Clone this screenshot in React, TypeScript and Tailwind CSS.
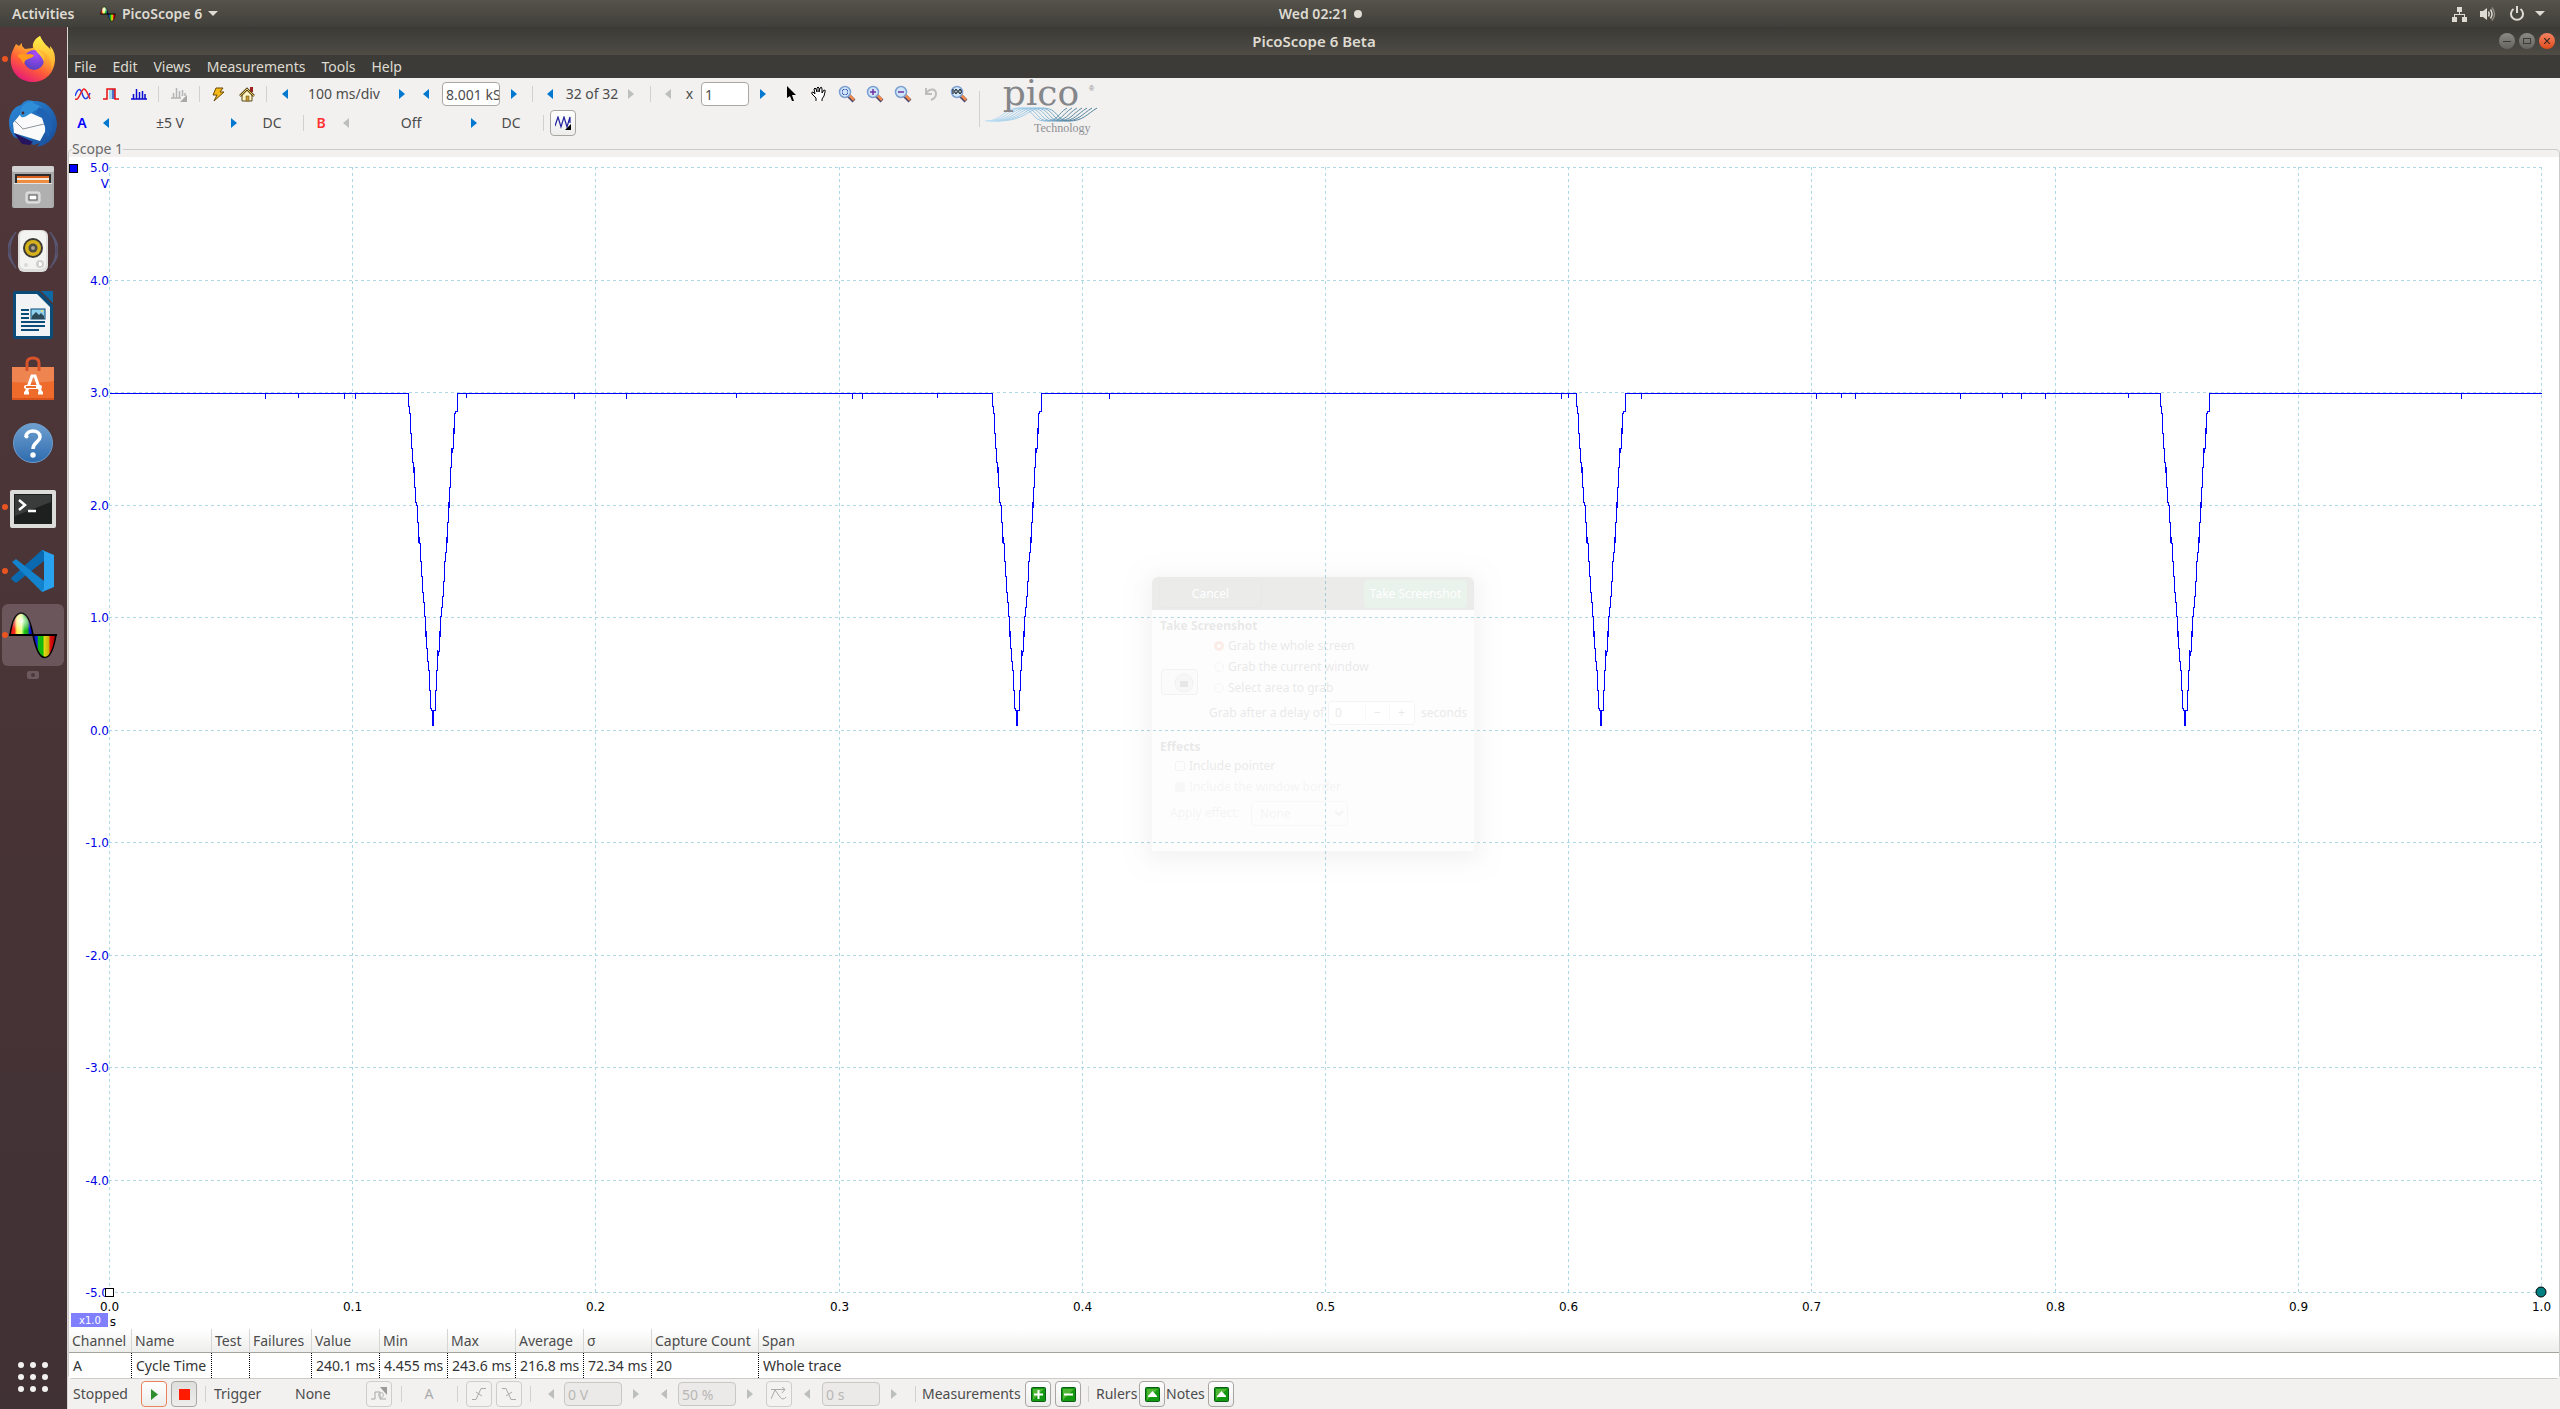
import { useLayoutEffect, useRef, useState, type ReactNode } from "react";

/* ---------- small shared pieces ---------- */

function Arrow({ dir, off, cell, label }: { dir: "l" | "r"; off?: boolean; cell: string; label: string }) {
  return (
    <button type="button" aria-label={label} disabled={off} className={`flex h-6 items-center justify-center ${cell}`}>
      <svg width="6" height="10" viewBox="0 0 6 10">
        <path d={dir === "l" ? "M6 0V10L0 5Z" : "M0 0V10L6 5Z"} fill={off ? "#bdbfbe" : "#0078d0"} />
      </svg>
    </button>
  );
}

function Sep({ cell }: { cell: string }) {
  return (
    <div className={`flex justify-center ${cell}`}>
      <div className="h-4 w-px bg-[#d3d1cf]" />
    </div>
  );
}

function Tool({ cell, label, children }: { cell: string; label: string; children: ReactNode }) {
  return (
    <button type="button" aria-label={label} className={`flex h-6 items-center justify-center ${cell}`}>
      {children}
    </button>
  );
}

function BoxButton({ label, off, className, children }: { label: string; off?: boolean; className?: string; children: ReactNode }) {
  return (
    <button
      type="button"
      aria-label={label}
      disabled={off}
      className={`flex size-[26px] shrink-0 items-center justify-center rounded border ${off ? "border-[#cfcdcb] bg-[#f3f2f1]" : "border-[#a9a6a2] bg-gradient-to-b from-white to-[#ededec]"} ${className ?? ""}`}
    >
      {children}
    </button>
  );
}

/* ---------- dock icons ---------- */

function Firefox() {
  return (
    <svg width="46" height="48" viewBox="0 0 46 48">
      <defs>
        <linearGradient id="ffA" x1="0.8" y1="0" x2="0.25" y2="1">
          <stop offset="0" stopColor="#fff44f" />
          <stop offset="0.35" stopColor="#ffb02e" />
          <stop offset="0.65" stopColor="#ff5b3a" />
          <stop offset="1" stopColor="#e3157e" />
        </linearGradient>
        <radialGradient id="ffB" cx="0.6" cy="0.2" r="0.9">
          <stop offset="0" stopColor="#a84bff" />
          <stop offset="1" stopColor="#4f3fb8" />
        </radialGradient>
        <linearGradient id="ffC" x1="0" y1="0" x2="0" y2="1">
          <stop offset="0" stopColor="#fff04a" />
          <stop offset="1" stopColor="#ffa52b" />
        </linearGradient>
      </defs>
      <path d="M6 9C4 13 2 16 1 21C-1 36 9 47 23 47C36 47 45 37 45 24C45 18 43 14 40 11L41 15C37 11 33 8 30 1C25 4 22 8 23 13L15 14L12 11L12 8L9 11Z" fill="url(#ffA)" />
      <circle cx="24" cy="25" r="10" fill="url(#ffB)" />
      <path d="M24 13C22 8 25 4 30 1C33 8 37 11 41 15L40 11C45 17 46 28 41 35C43 27 39 16 28 15C33 18 35 22 34 27C32 21 28 19 24 13Z" fill="url(#ffC)" />
      <path d="M7 21C11 17 15 20 20 19L24 20C23 23 20 23 18 24C15 25 14 27 14 29C12 26 11 23 7 21Z" fill="#ff9a1f" />
    </svg>
  );
}

function Thunderbird() {
  return (
    <svg width="48" height="48" viewBox="0 0 48 48">
      <defs>
        <linearGradient id="tbA" x1="0" y1="0" x2="1" y2="1">
          <stop offset="0" stopColor="#2b8bdb" />
          <stop offset="1" stopColor="#174a96" />
        </linearGradient>
      </defs>
      <path d="M24 2C37 1 47 11 48 24C48 37 40 46 28 48L31 44L25 46L5 38C1 33 0 28 0 22C1 12 7 7 12 6C15 2 19 0 24 2Z" fill="url(#tbA)" />
      <path d="M4 24L15 11L33 19L37 31L31 42L5 34Z" fill="#fafafa" />
      <path d="M6 22L14 30L35 25" fill="none" stroke="#8d959c" strokeWidth="1" />
      <path d="M11 16C11 7 17 2 25 2C21 5 29 4 33 9C27 9 25 13 19 16C17 18 12 20 11 16Z" fill="#2f8ed8" />
      <path d="M30 8C40 12 45 22 43 33L40 30L40 38L36 34C37 24 35 16 27 14Z" fill="#1f62b4" />
      <path d="M5 34L24 43L21 46L13 45Z" fill="#27145e" />
      <circle cx="14" cy="14" r="1.4" fill="#4a2b2a" />
    </svg>
  );
}

function Files() {
  return (
    <svg width="44" height="44" viewBox="0 0 44 44">
      <rect x="1" y="1" width="42" height="42" rx="2" fill="#a9a9a9" />
      <rect x="1" y="1" width="42" height="6" rx="2" fill="#d2d2d2" />
      <rect x="4" y="9" width="36" height="11" fill="#2f2b2a" />
      <rect x="6" y="11" width="32" height="3" fill="#d9601e" />
      <rect x="6" y="13" width="32" height="3" fill="#f4ead9" />
      <rect x="6" y="15" width="32" height="3" fill="#ee8d42" />
      <rect x="3" y="18" width="38" height="25" fill="#b0b0b0" />
      <rect x="3" y="18" width="38" height="1" fill="#e4e4e4" />
      <rect x="15" y="27" width="14" height="11" rx="2" fill="#d0d0d0" stroke="#e8e8e8" />
      <rect x="18" y="30" width="8" height="5" fill="#fff" stroke="#4c4c4c" />
    </svg>
  );
}

function Speaker() {
  return (
    <svg width="50" height="46" viewBox="0 0 50 46">
      <g fill="none" stroke="#5f6c9b" strokeWidth="1.5" opacity="0.6">
        <path d="M8 4C0 14 0 30 8 40M5 8C-2 18-1 28 5 36M42 4C50 14 50 30 42 40M45 8C52 18 51 28 45 36" />
      </g>
      <rect x="10" y="2" width="30" height="42" rx="6" fill="#dededc" />
      <rect x="12" y="3" width="26" height="38" rx="5" fill="#f3f3f1" />
      <circle cx="25" cy="20" r="10" fill="#3b3a35" />
      <circle cx="25" cy="20" r="8" fill="#d5b21c" />
      <circle cx="25" cy="20" r="4.500" fill="#4f4c42" />
      <circle cx="25" cy="20" r="2" fill="#a8a390" />
      <circle cx="32" cy="36" r="4" fill="#d0d0ce" />
      <path d="M31 34C35 33 35 39 31 38" fill="#fff" />
      <circle cx="18" cy="37" r="2" fill="#dadad8" />
    </svg>
  );
}

function Writer() {
  return (
    <svg width="42" height="48" viewBox="0 0 42 48">
      <path d="M3 0H27L41 14V45Q41 48 38 48H3Q1 48 1 45V2Q1 0 3 0Z" fill="#0b4d78" />
      <path d="M4 3H25L38 16V45H4Z" fill="#f1f3f4" />
      <path d="M29 0H41V12Z" fill="#0f69a3" />
      <path d="M9 19H17M9 23H17M9 27H17M9 31H33M9 35H33M9 39H27" stroke="#0b4d78" strokeWidth="2" />
      <rect x="19" y="18" width="14" height="10" fill="#8fd0ef" stroke="#0b4d78" />
      <path d="M20 28V25L24 21L27 24L29 22L32 25V28Z" fill="#2c4a58" />
      <circle cx="30" cy="20" r="1" fill="#ffe05a" />
    </svg>
  );
}

function Software() {
  return (
    <svg width="44" height="46" viewBox="0 0 44 46">
      <path d="M1 11H43V44H1Z" fill="#ef6b2c" />
      <path d="M1 11H43V25C30 27 14 27 1 26Z" fill="#ee8550" />
      <rect x="1" y="42" width="42" height="2" fill="#d9531c" />
      <path d="M16 15V7Q16 2 22 2Q28 2 28 7V15" fill="none" stroke="#d8532a" strokeWidth="3" />
      <path d="M15 37L21 20H24L30 37M13 37H18M27 37H32" fill="none" stroke="#fff" strokeWidth="3" />
      <rect x="13" y="29" width="18" height="4" rx="2" fill="#fff" />
      <rect x="15" y="30" width="10" height="2" fill="#ef6b2c" />
    </svg>
  );
}

function HelpIcon() {
  return (
    <svg width="42" height="42" viewBox="0 0 42 42">
      <defs>
        <linearGradient id="hpA" x1="0" y1="0" x2="0" y2="1">
          <stop offset="0" stopColor="#6fa0d0" />
          <stop offset="1" stopColor="#2e6cae" />
        </linearGradient>
      </defs>
      <circle cx="21" cy="21" r="19.500" fill="url(#hpA)" stroke="#6f9ccb" />
      <path d="M14 15C14 7 28 7 28 15C28 20 21 20 21 27" fill="none" stroke="#fff" strokeWidth="3.500" />
      <circle cx="14.500" cy="14.500" r="2" fill="#fff" />
      <circle cx="21" cy="33" r="2.700" fill="#fff" />
    </svg>
  );
}

function Terminal() {
  return (
    <svg width="46" height="41" viewBox="0 -3 46 41">
      <rect x="0" y="0" width="46" height="38" rx="2" fill="#dcdcdb" />
      <rect x="4" y="4" width="38" height="30" fill="#1e1f1f" />
      <path d="M5 5H41V12L5 26Z" fill="#3a3c3b" />
      <path d="M9 10L15 15L9 20M18 21H26" fill="none" stroke="#fff" strokeWidth="2.500" />
    </svg>
  );
}

function Code() {
  return (
    <svg width="44" height="44" viewBox="0 0 44 44">
      <path d="M31 1L33 1V12L5 34L1 31L0 29Z" fill="#0b69b0" />
      <path d="M1 13L5 10L33 32V42L31 43Z" fill="#1283cc" />
      <path d="M31 1L43 6V38L31 43L33 40V3Z" fill="#29a3f0" />
    </svg>
  );
}

function PicoWave({ w, h }: { w: number; h: number }) {
  return (
    <svg width={w} height={h} viewBox="0 0 50 48">
      <defs>
        <linearGradient id="pwA">
          <stop offset="0" stopColor="#e01010" />
          <stop offset="0.2" stopColor="#f03020" />
          <stop offset="0.3" stopColor="#fff04a" />
          <stop offset="0.5" stopColor="#e8ff80" />
          <stop offset="0.62" stopColor="#18c818" />
          <stop offset="0.78" stopColor="#18a018" />
          <stop offset="0.84" stopColor="#1020e0" />
          <stop offset="1" stopColor="#0808a0" />
        </linearGradient>
        <linearGradient id="pwB">
          <stop offset="0" stopColor="#1010c0" />
          <stop offset="0.18" stopColor="#1020e0" />
          <stop offset="0.24" stopColor="#10b810" />
          <stop offset="0.42" stopColor="#10b810" />
          <stop offset="0.5" stopColor="#e0d810" />
          <stop offset="0.68" stopColor="#c8b008" />
          <stop offset="0.75" stopColor="#e01010" />
          <stop offset="1" stopColor="#a00000" />
        </linearGradient>
        <radialGradient id="pwC" cx="0.5" cy="0.35" r="0.5">
          <stop offset="0" stopColor="#fff" stopOpacity="0.9" />
          <stop offset="1" stopColor="#fff" stopOpacity="0" />
        </radialGradient>
      </defs>
      <path d="M2 24C6 -5 20 -5 25 24Z" fill="url(#pwA)" stroke="#000" strokeWidth="1.500" />
      <path d="M2 24C6 -5 20 -5 25 24Z" fill="url(#pwC)" />
      <path d="M25 24C31 54 43 54 48 24Z" fill="url(#pwB)" stroke="#000" strokeWidth="1.500" />
      <path d="M1 24H49" stroke="#000" strokeWidth="2" />
    </svg>
  );
}

const dockItems = [
  { name: "Firefox", icon: <Firefox />, dot: true },
  { name: "Thunderbird Mail", icon: <Thunderbird /> },
  { name: "Files", icon: <Files /> },
  { name: "Rhythmbox", icon: <Speaker /> },
  { name: "LibreOffice Writer", icon: <Writer /> },
  { name: "Ubuntu Software", icon: <Software /> },
  { name: "Help", icon: <HelpIcon /> },
  { name: "Terminal", icon: <Terminal />, dot: true },
  { name: "Visual Studio Code", icon: <Code />, dot: true },
  { name: "PicoScope 6", icon: <PicoWave w={50} h={48} />, dot: true, active: true },
];

function Dock() {
  return (
    <nav aria-label="Dock" className="flex w-[67px] shrink-0 flex-col items-center bg-gradient-to-b from-[#513739] to-[#403134] pr-px">
      {dockItems.map((d) => (
        <button key={d.name} type="button" aria-label={d.name} className="flex h-16 w-full items-center">
          <span className="flex w-0 shrink-0 justify-start">
            <span className={`ml-0.5 size-[6px] shrink-0 rounded-full ${d.dot ? "z-10 bg-[#e95420]" : ""}`} />
          </span>
          <span className={`mx-auto flex h-[62px] w-[62px] items-center justify-center rounded-md ${d.active ? "bg-[#6b565b]" : ""}`}>
            {d.icon}
          </span>
        </button>
      ))}
      <div className="mt-1 flex h-2 w-3 items-center justify-center rounded-xs bg-[#6b595d]">
        <div className="size-1 rounded-full bg-[#4a3a3e]" />
      </div>
      <button type="button" aria-label="Show Applications" className="mt-auto mb-[17px] grid grid-cols-3 gap-[6px]">
        {Array.from({ length: 9 }, (_, i) => (
          <span key={i} className="size-[6px] rounded-full bg-[#f2f1f0]" />
        ))}
      </button>
    </nav>
  );
}

/* ---------- top panel, title bar and menus ---------- */

function TopPanel() {
  return (
    <header className="grid h-[27px] shrink-0 grid-cols-[1fr_auto_1fr] items-center bg-gradient-to-b from-[#55534b] to-[#403f3a] text-sm font-semibold text-[#dfdbd2]">
      <div className="flex items-center pl-3">
        <button type="button" className="w-[68px] text-left">Activities</button>
        <button type="button" className="ml-5 flex items-center gap-1.5">
          <PicoWave w={16} h={16} />
          PicoScope 6
          <svg width="10" height="5" viewBox="0 0 10 5"><path d="M0 0H10L5 5Z" fill="#dfdbd2" /></svg>
        </button>
      </div>
      <button type="button" className="ml-[67px] flex items-center gap-1.5 pl-[14px]">
        Wed 02:21
        <span className="size-2 rounded-full bg-[#dfdbd2]" />
      </button>
      <button type="button" aria-label="System menu" className="flex items-center justify-self-end pr-[15px]">
        <svg width="16" height="16" viewBox="0 0 16 16" className="mr-[12px]" fill="#dfdbd2">
          <path d="M5 1H10V6H8V8H13V11H15V16H10V11H12V9H3V11H5V16H0V11H2V8H7V6H5Z" />
        </svg>
        <svg width="16" height="16" viewBox="0 0 16 16" className="mr-[14px]">
          <path d="M0 5H3L7 2V14L3 11H0Z" fill="#dfdbd2" />
          <path d="M8.500 5.500Q10 8 8.500 10.500M10.500 3.500Q13.500 8 10.500 12.500" fill="none" stroke="#dfdbd2" strokeWidth="1.500" />
          <path d="M12 1.500Q17 8 12 14.500" fill="none" stroke="#8d8a82" strokeWidth="1.500" />
        </svg>
        <svg width="14" height="15" viewBox="0 0 14 15" className="mr-[11px]" fill="none" stroke="#dfdbd2" strokeWidth="2">
          <path d="M3.500 3A6 6 0 1 0 10.500 3M7 0V7" />
        </svg>
        <svg width="10" height="5" viewBox="0 0 10 5"><path d="M0 0H10L5 5Z" fill="#dfdbd2" /></svg>
      </button>
    </header>
  );
}

function TitleBar() {
  return (
    <div className="grid h-7 shrink-0 grid-cols-[1fr_auto_1fr] items-center bg-gradient-to-b from-[#3b3a36] to-[#4e4c45] text-[15px] font-semibold text-[#dfdbd2]">
      <h1 className="col-start-2">PicoScope 6 Beta</h1>
      <div className="flex gap-1 justify-self-end pr-[5px]">
        <button type="button" aria-label="Minimise" className="flex size-4 items-center justify-center rounded-full bg-gradient-to-b from-[#8c8a84] to-[#66645e]">
          <svg width="8" height="8" viewBox="0 0 8 8"><path d="M0 4.500H8" stroke="#3c3b37" /></svg>
        </button>
        <button type="button" aria-label="Maximise" className="flex size-4 items-center justify-center rounded-full bg-gradient-to-b from-[#8c8a84] to-[#66645e]">
          <svg width="8" height="6" viewBox="0 0 8 6"><rect x="0.500" y="0.500" width="7" height="5" fill="none" stroke="#3c3b37" /></svg>
        </button>
        <button type="button" aria-label="Close" className="flex size-4 items-center justify-center rounded-full bg-gradient-to-b from-[#f58260] to-[#df4a16]">
          <svg width="6" height="6" viewBox="0 0 6 6"><path d="M0 0L6 6M6 0L0 6" stroke="#3c2a20" strokeWidth="1.200" /></svg>
        </button>
      </div>
    </div>
  );
}

function MenuBar() {
  return (
    <nav aria-label="Menu" className="flex h-[23px] shrink-0 items-center gap-4 bg-[#3c3b37] pl-[6px] text-sm text-[#dfdbd2]">
      {["File", "Edit", "Views", "Measurements", "Tools", "Help"].map((m) => (
        <button key={m} type="button">{m}</button>
      ))}
    </nav>
  );
}

/* ---------- toolbar ---------- */

function Magnifier({ children }: { children: ReactNode }) {
  return (
    <svg width="18" height="18" viewBox="0 0 18 18">
      <path d="M10 10L16 16" stroke="#4a4468" strokeWidth="4" />
      <path d="M11 10L16 15" stroke="#f08a4a" strokeWidth="2.500" />
      <circle cx="7" cy="7" r="5.500" fill="#cfe6f8" stroke="#7c9fd0" strokeWidth="1.500" />
      {children}
    </svg>
  );
}

function PicoLogo() {
  return (
    <svg width="114" height="52" viewBox="0 0 114 52" role="img" aria-label="pico Technology" className="overflow-visible">
      <defs>
        <linearGradient id="lgA" gradientUnits="userSpaceOnUse" x1="0" y1="0" x2="114" y2="0">
          <stop offset="0" stopColor="#bfe0f5" />
          <stop offset="0.5" stopColor="#8fc0e0" />
          <stop offset="0.7" stopColor="#5b8ba6" />
          <stop offset="1" stopColor="#4d7f99" />
        </linearGradient>
      </defs>
      <g fill="none" stroke="url(#lgA)">
        {[0, 1, 2, 3, 4, 5, 6].map((i) => (
          <path
            key={i}
            d={`M${i * 2} 38C${18 + i * 4} 38 ${18 + i * 4} 25 ${34 + i * 4} 25S${46 + i * 4} 38 ${60 + i * 4} 38S${72 + i * 5} 31 ${82 + i * 5} 25`}
          />
        ))}
      </g>
      <text x="56" y="22" textAnchor="middle" fill="#85868a" fontSize="36" fontFamily="'DejaVu Serif', serif">pico</text>
      <text x="104" y="8" fill="#85868a" fontSize="7" fontFamily="'Liberation Sans', sans-serif">®</text>
      <text x="49" y="49" fill="#8f9093" fontSize="12" fontFamily="'Liberation Serif', serif">Technology</text>
    </svg>
  );
}

function Toolbar() {
  return (
    <div className="flex shrink-0 items-center pt-0.5 text-sm text-[#4c4c4c]">
      <div>
        <div className="flex h-7 items-center pl-px">
          <Tool cell="w-7" label="Scope mode">
            <svg width="16" height="12" viewBox="0 0 16 12" fill="none" strokeWidth="1.500">
              <path d="M0 8C3 0 5 0 7 5C9 12 12 13 15 5" stroke="#2040e8" />
              <path d="M0 11C3 13 5 6 7 3C9-1 11 1 15 11" stroke="#e82020" />
            </svg>
          </Tool>
          <Tool cell="w-7" label="Persistence mode">
            <svg width="16" height="12" viewBox="0 0 16 12">
              <rect x="6" y="1" width="3" height="10" fill="#a0d8f0" />
              <rect x="9" y="1" width="3" height="10" fill="#5070c8" />
              <path d="M0 11H4V1H12V11H16" fill="none" stroke="#e81010" strokeWidth="1.500" />
            </svg>
          </Tool>
          <Tool cell="w-7" label="Spectrum mode">
            <svg width="16" height="12" viewBox="0 0 16 12"><path d="M0 11H16M2.500 11V6M5.500 11V1M8.500 11V4M11.500 11V3M14 11V6" stroke="#0808d0" strokeWidth="1.500" fill="none" /></svg>
          </Tool>
          <Sep cell="w-[10px]" />
          <Tool cell="w-8" label="Spectrum options">
            <svg width="16" height="15" viewBox="0 0 16 15"><path d="M0 11H10M2.500 11V6M5.500 11V1M8.500 11V4M11.500 9V3M14 9V6" stroke="#b4b4b4" strokeWidth="1.500" fill="none" /><path d="M16 8V15H9Z" fill="#a8a8a8" /></svg>
          </Tool>
          <Sep cell="w-2" />
          <Tool cell="w-[30px]" label="Auto setup">
            <svg width="14" height="15" viewBox="0 0 14 15"><path d="M5 1H12L9 5H13L3 14L6 8H2Z" fill="#f4b818" stroke="#6b4a00" /></svg>
          </Tool>
          <Tool cell="w-7" label="Startup settings">
            <svg width="16" height="15" viewBox="0 0 16 15">
              <rect x="11" y="0" width="3" height="5" fill="#a02020" />
              <path d="M3 8V14H13V8L8 3Z" fill="#fff3c0" stroke="#5a4a20" />
              <path d="M1 9L8 2L15 9" fill="none" stroke="#5a4a20" strokeWidth="2.500" />
              <path d="M1 9L8 2L15 9" fill="none" stroke="#e8c860" />
              <rect x="7" y="9" width="3" height="5" fill="#c89830" stroke="#5a4a20" strokeWidth="0.500" />
            </svg>
          </Tool>
          <Sep cell="w-[10px]" />
          <Arrow dir="l" cell="w-7" label="Shorter timebase" />
          <span className="w-[90px] text-center">100 ms/div</span>
          <Arrow dir="r" cell="w-[26px]" label="Longer timebase" />
          <Arrow dir="l" cell="w-[22px]" label="Fewer samples" />
          <input aria-label="Samples" defaultValue="8.001 kS" className="ml-[5px] h-6 w-[58px] rounded border border-[#aaa7a3] bg-white pl-[3px]" />
          <Arrow dir="r" cell="w-7" label="More samples" />
          <Sep cell="w-2" />
          <Arrow dir="l" cell="w-7" label="Previous buffer" />
          <span className="w-14 text-center whitespace-nowrap">32 of 32</span>
          <Arrow dir="r" off cell="w-[22px]" label="Next buffer" />
          <Sep cell="w-4" />
          <Arrow dir="l" off cell="w-5" label="Decrease zoom" />
          <label htmlFor="zoom" className="w-[23px] text-center">x</label>
          <input id="zoom" defaultValue="1" className="h-6 w-12 rounded border border-[#aaa7a3] bg-white pl-[3px]" />
          <Arrow dir="r" cell="w-7" label="Increase zoom" />
          <Tool cell="w-7" label="Select">
            <svg width="9" height="16" viewBox="0 0 9 16"><path d="M0 0V12L3 10L5 15H7L5 9H9Z" fill="#000" /></svg>
          </Tool>
          <Tool cell="w-7" label="Pan">
            <svg width="16" height="16" viewBox="0 0 16 16"><path d="M5 15V12L1 8Q0 6 2 6L4 8L3 3Q4 1 5 3L6 6V2Q7 0 8 2V6L9 2Q11 0 11 3V7L13 4Q15 4 14 6L13 10L11 13V15" fill="#fff" stroke="#000" /></svg>
          </Tool>
          <Tool cell="w-7" label="Marquee zoom"><Magnifier><path d="M5 4.500H9M5 9.500H9M4.500 5V9M9.500 5V9" stroke="#3850b0" strokeDasharray="1.500 1" /></Magnifier></Tool>
          <Tool cell="w-7" label="Zoom in"><Magnifier><path d="M4 7H10M7 4V10" stroke="#7030a0" strokeWidth="1.500" /></Magnifier></Tool>
          <Tool cell="w-7" label="Zoom out"><Magnifier><path d="M4 7H10" stroke="#7030a0" strokeWidth="1.500" /></Magnifier></Tool>
          <Tool cell="w-7" label="Undo zoom">
            <svg width="14" height="15" viewBox="0 0 14 15"><path d="M2 1V7H8M2 7C5 1 12 1 12 7Q12 11 7 13" fill="none" stroke="#bdbdbd" strokeWidth="2" /></svg>
          </Tool>
          <Tool cell="w-7" label="Zoom to full view">
            <Magnifier><path d="M3 4V9" stroke="#000" /><ellipse cx="6" cy="6.500" rx="1.300" ry="2" fill="none" stroke="#000" /><ellipse cx="10" cy="6.500" rx="1.300" ry="2" fill="none" stroke="#000" /></Magnifier>
          </Tool>
        </div>
        <div className="flex h-[30px] items-center">
          <button type="button" className="w-7 text-center font-semibold text-[#0000ff]">A</button>
          <Arrow dir="l" cell="w-5" label="Channel A smaller range" />
          <span className="w-[108px] text-center">±5 V</span>
          <Arrow dir="r" cell="w-5" label="Channel A larger range" />
          <button type="button" className="w-14 text-center">DC</button>
          <Sep cell="w-[6px]" />
          <button type="button" className="w-[30px] text-center font-semibold text-[#ff3030]">B</button>
          <Arrow dir="l" off cell="w-5" label="Channel B smaller range" />
          <span className="w-[110px] text-center">Off</span>
          <Arrow dir="r" cell="w-4" label="Channel B larger range" />
          <button type="button" className="w-[58px] text-center">DC</button>
          <Sep cell="w-[6px]" />
          <BoxButton label="Signal generator" className="ml-1">
            <svg width="16" height="14" viewBox="0 0 16 14"><path d="M0 10L3 1L6 11L9 1L12 11L15 1V7" fill="none" stroke="#2020a0" strokeWidth="1.200" /><path d="M16 8V14H10Z" fill="#000" /></svg>
          </BoxButton>
        </div>
      </div>
      <div className="flex w-3 justify-center"><div className="h-9 w-px bg-[#d3d1cf]" /></div>
      <PicoLogo />
    </div>
  );
}

/* ---------- scope view ---------- */

// One dip of the trace: [x offset in px from its centre, drop in px below 3 V], for a 1125 px tall plot.
const dip: [number, number][] = [
  [-25, 0], [-25, 13], [-24, 13], [-24, 20], [-23, 20], [-23, 40], [-22, 40], [-22, 55], [-21, 55], [-21, 69], [-20, 69],
  [-20, 79], [-19, 74], [-19, 94], [-18, 94], [-18, 109], [-17, 109], [-17, 112], [-16, 112], [-16, 129], [-15, 129],
  [-15, 149], [-14, 144], [-14, 150], [-13, 150], [-13, 168], [-12, 168], [-12, 183], [-11, 183], [-11, 199], [-10, 199],
  [-10, 209], [-9, 209], [-9, 223], [-8, 223], [-8, 243], [-7, 238], [-7, 255], [-6, 255], [-6, 268], [-5, 268], [-5, 277],
  [-4, 277], [-4, 297], [-3, 297], [-3, 315], [-2, 315], [-2, 317], [-1, 317], [-1, 332], [0, 332], [0, 317], [2, 317],
  [2, 297], [3, 297], [3, 277], [4, 277], [4, 257], [5, 262], [5, 258], [6, 258], [6, 238], [7, 243], [7, 223], [8, 223],
  [8, 214], [9, 214], [9, 203], [10, 203], [10, 188], [11, 188], [11, 168], [12, 168], [12, 159], [13, 159], [13, 144],
  [14, 149], [14, 129], [15, 129], [15, 109], [16, 114], [16, 94], [17, 94], [17, 74], [18, 74], [18, 55], [19, 59],
  [19, 55], [20, 55], [20, 35], [21, 40], [21, 20], [22, 20], [22, 18], [24, 18], [24, 0],
];
const dipTimes = [0.1333, 0.3733, 0.6135, 0.8537];
const noise = [0.0642, 0.0777, 0.0965, 0.1012, 0.1469, 0.1912, 0.2127, 0.258, 0.3055, 0.3095, 0.3405, 0.411, 0.597, 0.6, 0.63, 0.7017, 0.712, 0.718, 0.761, 0.7785, 0.786, 0.796, 0.8303, 0.967];

function Plot() {
  const box = useRef<HTMLDivElement>(null);
  const [size, setSize] = useState({ w: 2489, h: 1171 });
  useLayoutEffect(() => {
    const el = box.current;
    if (!el) return;
    const read = () => setSize({ w: el.clientWidth, h: el.clientHeight });
    read();
    const ro = new ResizeObserver(read);
    ro.observe(el);
    return () => ro.disconnect();
  }, []);
  const left = 40;
  const top = 10;
  const right = size.w - 18;
  const bottom = size.h - 37;
  const px = (t: number) => Math.round(left + t * (right - left)) + 0.5;
  const py = (v: number) => Math.round(top + ((5 - v) / 10) * (bottom - top)) + 0.5;
  const scale = (bottom - top) / 1125;
  const base = py(3) + 1;
  const line =
    `M${px(0)} ${base}` +
    dipTimes.map((t) => dip.map(([x, y]) => `L${px(t) + x} ${base + Math.round(y * scale)}`).join("")).join("") +
    `H${px(1)}` +
    noise.map((t, i) => `M${px(t)} ${base}v${i % 3 === 1 ? 4 : 5}`).join("");
  const ticks = Array.from({ length: 11 }, (_, i) => i);
  return (
    <div ref={box} className="min-h-0 flex-1 overflow-hidden bg-white">
      <svg width={size.w} height={size.h} fontFamily="'DejaVu Sans', sans-serif" fontSize="12" className="block">
        <g stroke="#add8e6" strokeDasharray="3 3" shapeRendering="crispEdges">
          {ticks.map((i) => <path key={i} d={`M${left} ${py(5 - i)}H${right}`} />)}
          {ticks.map((i) => <path key={i} d={`M${px(i / 10)} ${top}V${bottom}`} />)}
        </g>
        <path d={line} fill="none" stroke="#0000ff" shapeRendering="crispEdges" />
        <g fill="#0000e6" textAnchor="end">
          {ticks.map((i) => <text key={i} x={left} y={py(5 - i) + 4}>{(5 - i).toFixed(1)}</text>)}
          <text x={left} y={top + 21}>V</text>
        </g>
        <g fill="#000" textAnchor="middle">
          {ticks.map((i) => <text key={i} x={px(i / 10)} y={bottom + 19}>{(i / 10).toFixed(1)}</text>)}
          <text x={left + 4} y={bottom + 34}>s</text>
        </g>
        <rect x="0.500" y="7.500" width="8" height="8" fill="#0000ff" stroke="#000" />
        <rect x={left - 3.5} y={bottom - 3.5} width="8" height="8" fill="#fff" stroke="#000" />
        <circle cx={right} cy={bottom} r="5" fill="#008080" stroke="#000" />
        <rect x="2" y={bottom + 21} width="37" height="14" fill="#8080ff" />
        <text x="21" y={bottom + 32} fill="#fff" fontSize="10" textAnchor="middle">x1.0</text>
      </svg>
    </div>
  );
}

const columns: { head: string; value: string; col: string }[] = [
  { head: "Channel", value: "A", col: "w-[63px]" },
  { head: "Name", value: "Cycle Time", col: "w-[80px]" },
  { head: "Test", value: "", col: "w-[38px]" },
  { head: "Failures", value: "", col: "w-[62px]" },
  { head: "Value", value: "240.1 ms", col: "w-[68px]" },
  { head: "Min", value: "4.455 ms", col: "w-[68px]" },
  { head: "Max", value: "243.6 ms", col: "w-[68px]" },
  { head: "Average", value: "216.8 ms", col: "w-[68px]" },
  { head: "σ", value: "72.34 ms", col: "w-[68px]" },
  { head: "Capture Count", value: "20", col: "w-[107px]" },
  { head: "Span", value: "Whole trace", col: "" },
];

function MeasurementTable() {
  return (
    <table className="w-full shrink-0 table-fixed border-separate border-spacing-0 bg-white text-left text-sm whitespace-nowrap">
      <colgroup>
        {columns.map((c) => <col key={c.head} className={c.col} />)}
      </colgroup>
      <thead>
        <tr className="h-6 bg-gradient-to-b from-white to-[#ededeb] text-[#4c4c4c]">
          {columns.map((c) => (
            <th key={c.head} scope="col" className="border-r border-b border-r-[#d8d6d4] border-b-[#a5a39d] p-0 pl-[3px] font-normal last:border-r-0">{c.head}</th>
          ))}
        </tr>
      </thead>
      <tbody>
        <tr className="h-[25px] text-[#333]">
          {columns.map((c) => (
            <td key={c.head} className="border-r border-dotted border-black p-0 pl-1 last:border-r-0">{c.value}</td>
          ))}
        </tr>
      </tbody>
    </table>
  );
}

/* ---------- trigger bar ---------- */

function GreenIcon({ d }: { d: string }) {
  return (
    <svg width="15" height="15" viewBox="0 0 15 15">
      <rect x="0.500" y="0.500" width="14" height="14" rx="1" fill="#12990f" stroke="#0b5a18" />
      <path d="M2 2H13L2 13Z" fill="#4fb535" />
      <path d={d} fill="#fff" />
    </svg>
  );
}

function BottomBar() {
  const plus = "M6.500 3H8.500V6.500H12V8.500H8.500V12H6.500V8.500H3V6.500H6.500Z";
  const minus = "M3 6.500H12V8.500H3Z";
  const up = "M7.500 4L12 9V10H3V9Z";
  const field = "h-6 w-[58px] rounded border border-[#c9c7c4] bg-[#ebeae8] pl-[3px] text-[#b9b7b5]";
  return (
    <footer className="flex h-[30px] shrink-0 items-center pl-[5px] text-sm text-[#4c4c4c]">
      <span className="w-[68px]">Stopped</span>
      <BoxButton label="Start" className="border-[#e9825a]!">
        <svg width="7" height="11" viewBox="0 0 7 11"><path d="M0 0V11L7 5.500Z" fill="#2f8f2f" /></svg>
      </BoxButton>
      <BoxButton label="Stop" className="ml-1 from-[#dededd]!">
        <span className="size-[11px] bg-[#ff1a00]" />
      </BoxButton>
      <Sep cell="w-[17px]" />
      <span className="w-[81px]">Trigger</span>
      <span className="w-[71px]">None</span>
      <BoxButton label="Advanced triggers" off>
        <svg width="16" height="16" viewBox="0 0 16 16"><path d="M0 13H4V6H9V13H15" fill="none" stroke="#a5a5a5" /><path d="M9 1H16V9Z" fill="#9a9a9a" /><circle cx="10" cy="9" r="2.500" fill="none" stroke="#bbb" /></svg>
      </BoxButton>
      <Sep cell="w-[18px]" />
      <span className="w-[38px] text-center text-[#aaa]">A</span>
      <Sep cell="w-[18px]" />
      <BoxButton label="Rising edge" off>
        <svg width="14" height="14" viewBox="0 0 14 14"><path d="M0 12.500H4L9 1.500H14M4 5L10 9" fill="none" stroke="#aaa" /></svg>
      </BoxButton>
      <BoxButton label="Falling edge" off className="ml-1">
        <svg width="14" height="14" viewBox="0 0 14 14"><path d="M0 1.500H4L9 12.500H14M4 9L10 5" fill="none" stroke="#aaa" /></svg>
      </BoxButton>
      <Sep cell="w-[16px]" />
      <Arrow dir="l" off cell="w-[26px]" label="Lower threshold" />
      <input aria-label="Threshold" disabled defaultValue="0 V" className={field} />
      <Arrow dir="r" off cell="w-7" label="Raise threshold" />
      <Arrow dir="l" off cell="w-7" label="Less pre-trigger" />
      <input aria-label="Pre-trigger" disabled defaultValue="50 %" className={field} />
      <Arrow dir="r" off cell="w-7" label="More pre-trigger" />
      <BoxButton label="Trigger delay" off className="ml-0.5">
        <svg width="16" height="15" viewBox="0 0 16 15"><path d="M0 12L4 3L9 10Q12 14 15 10M0 2.500H14M11 0L14 2.500L11 6" fill="none" stroke="#aaa" /></svg>
      </BoxButton>
      <Arrow dir="l" off cell="w-[30px]" label="Shorter delay" />
      <input aria-label="Delay" disabled defaultValue="0 s" className={field} />
      <Arrow dir="r" off cell="w-7" label="Longer delay" />
      <Sep cell="w-[14px]" />
      <span className="w-[103px]">Measurements</span>
      <BoxButton label="Add measurement"><GreenIcon d={plus} /></BoxButton>
      <BoxButton label="Delete measurement" className="ml-1"><GreenIcon d={minus} /></BoxButton>
      <Sep cell="w-[15px]" />
      <span className="w-[43px]">Rulers</span>
      <BoxButton label="Show rulers"><GreenIcon d={up} /></BoxButton>
      <span className="w-[43px] pl-px">Notes</span>
      <BoxButton label="Show notes"><GreenIcon d={up} /></BoxButton>
    </footer>
  );
}

/* ---------- screenshot dialog, nearly faded out ---------- */

function FadingDialog() {
  return (
    <div className="pointer-events-none absolute inset-0 flex items-center justify-center pr-0.5 pb-2 text-xs text-[#2c2c2c] opacity-10">
      <div className="flex h-[274px] w-[322px] flex-col rounded-t-md bg-[#f2f1f0] shadow-[0_4px_20px_6px_rgba(0,0,0,0.4)]">
        <div className="flex h-[33px] items-center justify-between rounded-t-md bg-[#45443f] px-[7px] text-white">
          <button type="button" className="h-7 w-[103px] rounded border border-[#2f2e2a]">Cancel</button>
          <button type="button" className="h-7 w-[103px] rounded bg-[#2f8a47] whitespace-nowrap">Take Screenshot</button>
        </div>
        <h2 className="mt-2 ml-2 h-[17px] font-bold">Take Screenshot</h2>
        <div className="flex">
          <svg width="37" height="28" viewBox="0 0 37 28" className="mt-[33px] ml-[9px] shrink-0">
            <rect x="0.500" y="1.500" width="36" height="25" rx="3" fill="#ddd" stroke="#888" />
            <circle cx="23" cy="15" r="9" fill="#bbb" stroke="#777" />
            <rect x="19" y="13" width="8" height="6" fill="#222" />
          </svg>
          <div className="ml-4 flex flex-col">
            {["Grab the whole screen", "Grab the current window", "Select area to grab"].map((t, i) => (
              <label key={t} className="flex h-[21px] items-center gap-1">
                <input type="radio" name="area" defaultChecked={i === 0} className={`size-[10px] appearance-none rounded-full ${i === 0 ? "border-[3px] border-[#e95420]" : "border border-[#999]"}`} />
                {t}
              </label>
            ))}
          </div>
        </div>
        <div className="flex h-[29px] items-center pl-[57px]">
          <label htmlFor="delay" className="w-[119px] shrink-0 whitespace-nowrap">Grab after a delay of</label>
          <div className="flex h-6 w-[87px] shrink-0 items-center rounded border border-[#999] bg-white">
            <input id="delay" defaultValue="0" className="w-9 pl-1.5" />
            <button type="button" className="w-6 border-l border-[#bbb]">−</button>
            <button type="button" className="w-6 border-l border-[#bbb]">+</button>
          </div>
          <span className="ml-1.5">seconds</span>
        </div>
        <h2 className="mt-3 ml-2 h-4 font-bold">Effects</h2>
        <label className="ml-[23px] flex h-[21px] items-center gap-1">
          <input type="checkbox" className="size-[10px] appearance-none rounded-xs border border-[#999]" />
          Include pointer
        </label>
        <label className="ml-[23px] flex h-[21px] items-center gap-1 text-[#999]">
          <input type="checkbox" defaultChecked disabled className="size-[10px] appearance-none rounded-xs bg-[#bbb]" />
          Include the window border
        </label>
        <div className="flex h-8 items-center pl-[18px] text-[#999]">
          <label htmlFor="effect" className="w-[81px]">Apply effect:</label>
          <select id="effect" disabled className="h-[25px] w-[97px] rounded border border-[#bbb] pl-1">
            <option>None</option>
          </select>
        </div>
      </div>
    </div>
  );
}

export default function App() {
  return (
    <div className="flex h-screen flex-col overflow-hidden bg-[#f2f1f0] font-['Noto_Sans',sans-serif]">
      <TopPanel />
      <div className="flex min-h-0 flex-1">
        <Dock />
        <main className="relative flex min-w-0 flex-1 flex-col border-l border-[#d9d6d3]">
          <TitleBar />
          <MenuBar />
          <Toolbar />
          <fieldset className="mt-[3px] flex min-h-0 min-w-0 flex-1 flex-col rounded border border-[#cdcbc8]">
            <legend className="ml-[3px] text-sm leading-4 text-[#6b6b6b]">Scope 1</legend>
            <Plot />
            <MeasurementTable />
          </fieldset>
          <BottomBar />
          <FadingDialog />
        </main>
      </div>
    </div>
  );
}
